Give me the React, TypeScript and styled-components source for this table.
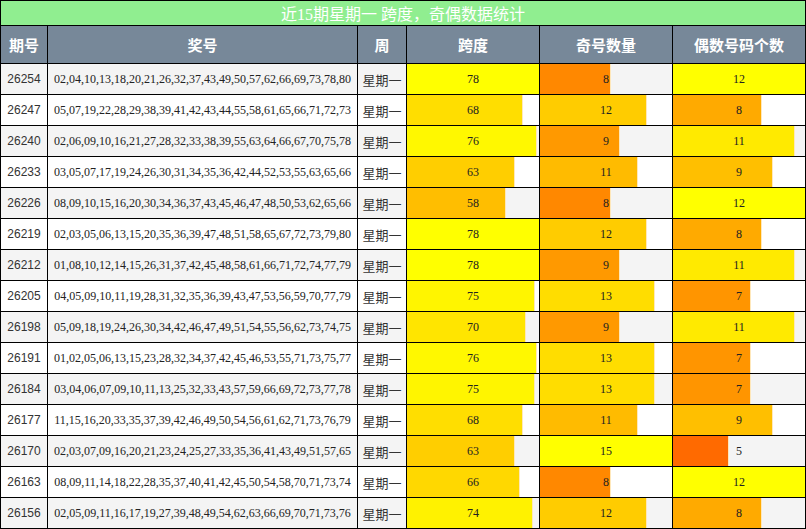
import React from "react";
import styled, { createGlobalStyle } from "styled-components";

const Global = createGlobalStyle`
  html, body { margin: 0; padding: 0; background: #fff; }
  body { font-family: "Liberation Serif", "Noto Sans CJK SC", serif; }
`;

type Row = { id: string; nums: string; span: number; odd: number; even: number };

const rows: Row[] = [
  { id: "26254", nums: "02,04,10,13,18,20,21,26,32,37,43,49,50,57,62,66,69,73,78,80", span: 78, odd: 8, even: 12 },
  { id: "26247", nums: "05,07,19,22,28,29,38,39,41,42,43,44,55,58,61,65,66,71,72,73", span: 68, odd: 12, even: 8 },
  { id: "26240", nums: "02,06,09,10,16,21,27,28,32,33,38,39,55,63,64,66,67,70,75,78", span: 76, odd: 9, even: 11 },
  { id: "26233", nums: "03,05,07,17,19,24,26,30,31,34,35,36,42,44,52,53,55,63,65,66", span: 63, odd: 11, even: 9 },
  { id: "26226", nums: "08,09,10,15,16,20,30,34,36,37,43,45,46,47,48,50,53,62,65,66", span: 58, odd: 8, even: 12 },
  { id: "26219", nums: "02,03,05,06,13,15,20,35,36,39,47,48,51,58,65,67,72,73,79,80", span: 78, odd: 12, even: 8 },
  { id: "26212", nums: "01,08,10,12,14,15,26,31,37,42,45,48,58,61,66,71,72,74,77,79", span: 78, odd: 9, even: 11 },
  { id: "26205", nums: "04,05,09,10,11,19,28,31,32,35,36,39,43,47,53,56,59,70,77,79", span: 75, odd: 13, even: 7 },
  { id: "26198", nums: "05,09,18,19,24,26,30,34,42,46,47,49,51,54,55,56,62,73,74,75", span: 70, odd: 9, even: 11 },
  { id: "26191", nums: "01,02,05,06,13,15,23,28,32,34,37,42,45,46,53,55,71,73,75,77", span: 76, odd: 13, even: 7 },
  { id: "26184", nums: "03,04,06,07,09,10,11,13,25,32,33,43,57,59,66,69,72,73,77,78", span: 75, odd: 13, even: 7 },
  { id: "26177", nums: "11,15,16,20,33,35,37,39,42,46,49,50,54,56,61,62,71,73,76,79", span: 68, odd: 11, even: 9 },
  { id: "26170", nums: "02,03,07,09,16,20,21,23,24,25,27,33,35,36,41,43,49,51,57,65", span: 63, odd: 15, even: 5 },
  { id: "26163", nums: "08,09,11,14,18,22,28,35,37,40,41,42,45,50,54,58,70,71,73,74", span: 66, odd: 8, even: 12 },
  { id: "26156", nums: "02,05,09,11,16,17,19,27,39,48,49,54,62,63,66,69,70,71,73,76", span: 74, odd: 12, even: 8 },
];

const Table = styled.div`
  width: 806px;
  display: grid;
  grid-template-columns: 46px 309px 48px 132px 132px 132px;
  grid-template-rows: 24px 37px repeat(15, 30px);
  gap: 1px;
  padding: 1px;
  box-sizing: border-box;
  background: #000;
`;

const Title = styled.div`
  grid-column: 1 / -1;
  background: #90ee90;
  color: #fff;
  font-family: "Liberation Serif", "Noto Sans CJK SC", serif;
  font-size: 16px;
  display: flex;
  align-items: center;
  justify-content: center;
  white-space: pre;
`;

const Head = styled.div`
  background: #778899;
  color: #fff;
  font-family: "Noto Sans CJK SC", sans-serif;
  font-weight: bold;
  font-size: 15px;
  display: flex;
  align-items: center;
  justify-content: center;
`;

const Cell = styled.div<{ $alt: boolean }>`
  background: ${(p) => (p.$alt ? "#f4f4f4" : "#fff")};
  display: flex;
  align-items: center;
  justify-content: center;
  color: #222;
  white-space: nowrap;
  overflow: hidden;
`;

const IdCell = styled(Cell)`
  font-family: "Liberation Sans", sans-serif;
  font-size: 12px;
  color: #333;
`;

const NumCell = styled(Cell)`
  font-family: "Liberation Serif", serif;
  font-size: 12px;
`;

const WeekCell = styled(Cell)`
  font-family: "Noto Sans CJK SC", sans-serif;
  font-size: 13px;
  color: #333;
`;

const BarCell = styled(Cell)`
  position: relative;
  font-family: "Liberation Serif", serif;
  font-size: 12px;
`;

const Bar = styled.div`
  position: absolute;
  left: 0;
  top: 0;
  bottom: 0;
  box-shadow: 1px 0 0 rgba(255, 230, 180, 0.9);
`;

const Value = styled.span`
  position: relative;
`;

function barColor(r: number) {
  return `rgb(255, ${Math.round(255 * r)}, 0)`;
}

function BarBox({ value, max, alt }: { value: number; max: number; alt: boolean }) {
  const r = value / max;
  return (
    <BarCell $alt={alt}>
      <Bar style={{ width: `${r * 100}%`, background: barColor(r) }} />
      <Value>{value}</Value>
    </BarCell>
  );
}

export default function App() {
  return (
    <>
      <Global />
      <Table>
        <Title>{"近15期星期一 跨度，奇偶数据统计"}</Title>
        <Head>期号</Head>
        <Head>奖号</Head>
        <Head>周</Head>
        <Head>跨度</Head>
        <Head>奇号数量</Head>
        <Head>偶数号码个数</Head>
        {rows.map((r, i) => {
          const alt = i % 2 === 0;
          return (
            <React.Fragment key={r.id}>
              <IdCell $alt={alt}>{r.id}</IdCell>
              <NumCell $alt={alt}>{r.nums}</NumCell>
              <WeekCell $alt={alt}>星期一</WeekCell>
              <BarBox value={r.span} max={78} alt={alt} />
              <BarBox value={r.odd} max={15} alt={alt} />
              <BarBox value={r.even} max={12} alt={alt} />
            </React.Fragment>
          );
        })}
      </Table>
    </>
  );
}
